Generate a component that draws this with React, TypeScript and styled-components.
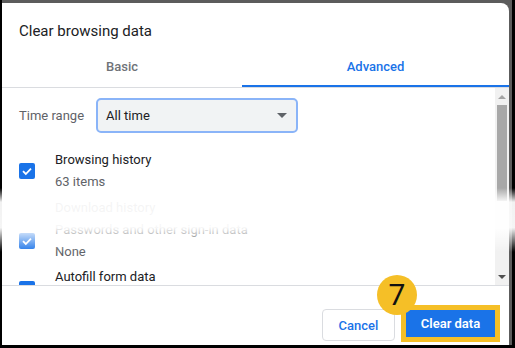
import React from "react"
import styled, { createGlobalStyle } from "styled-components"

const Global = createGlobalStyle`
  html, body {
    margin: 0;
    padding: 0;
    background: #000;
  }
  body {
    font-family: Roboto, "Liberation Sans", Arial, sans-serif;
  }
`

const Screen = styled.div`
  position: relative;
  width: 515px;
  height: 348px;
  background: #000;
  overflow: hidden;
`

const Frame = styled.div`
  margin-left: 2px;
  width: 510px;
  height: 345px;
  box-sizing: border-box;
  padding: 3px 3px 0 0;
  background: #5c5c5c;
`

const Dialog = styled.div`
  height: 342px;
  background: #fff;
  border-top-right-radius: 8px;
  display: flex;
  flex-direction: column;
`

const Title = styled.div`
  height: 47px;
  box-sizing: border-box;
  padding: 19px 0 0 17px;
  font-size: 15px;
  line-height: 18px;
  color: #202124;
`

const Tabs = styled.div`
  display: grid;
  grid-template-columns: 240px 1fr;
  height: 38px;
  box-sizing: border-box;
  border-bottom: 1px solid #dadce0;
`

const Tab = styled.div<{ $active?: boolean }>`
  display: flex;
  justify-content: center;
  padding-top: 9px;
  font-size: 13px;
  line-height: 15px;
  font-weight: 500;
  color: ${p => (p.$active ? "#1a73e8" : "#6f7378")};
  box-shadow: ${p => (p.$active ? "inset 0 -2px 0 #1a73e8" : "none")};
`

const Body = styled.div`
  display: flex;
  height: 197px;
  border-bottom: 1px solid #dadce0;
`

const Content = styled.div`
  flex: 1;
  padding: 10px 0 0 17px;
  overflow: hidden;
`

const RangeRow = styled.div`
  display: flex;
  align-items: center;
  gap: 12px;
  height: 35px;
`

const Label = styled.span`
  font-size: 13px;
  color: #5f6368;
`

const Select = styled.div`
  width: 202px;
  height: 35px;
  box-sizing: border-box;
  border: 2px solid #8ab4f8;
  border-radius: 5px;
  background: #f1f3f4;
  display: flex;
  align-items: center;
  justify-content: space-between;
  padding: 0 9px 0 8px;
  font-size: 13px;
  color: #202124;
`

const Caret = styled.span`
  width: 0;
  height: 0;
  border-left: 5px solid transparent;
  border-right: 5px solid transparent;
  border-top: 5px solid #5f6368;
`

const Items = styled.div`
  margin-top: 16px;
  display: flex;
  flex-direction: column;
`

const Item = styled.div<{ $gap?: number; $top?: boolean }>`
  display: grid;
  grid-template-columns: 36px 1fr;
  align-items: ${p => (p.$top ? "start" : "center")};
  margin-top: ${p => p.$gap || 0}px;
`

const Lines = styled.div`
  display: flex;
  flex-direction: column;
  font-size: 13px;
  line-height: 22px;
`

const Main = styled.span`
  color: #202124;
`

const Sub = styled.span`
  color: #5f6368;
`

const Box = styled.div<{ $offset?: number }>`
  width: 16px;
  height: 16px;
  margin-top: ${p => p.$offset || 0}px;
  border-radius: 2px;
  background: #1a73e8;
  display: flex;
  align-items: center;
  justify-content: center;
`

const Scrollbar = styled.div`
  width: 14px;
  background: #f1f1f1;
  display: flex;
  flex-direction: column;
  align-items: center;
`

const Arrow = styled.div<{ $down?: boolean; $color: string }>`
  height: 17px;
  display: flex;
  align-items: center;
  justify-content: center;
  &::before {
    content: "";
    border-left: 4px solid transparent;
    border-right: 4px solid transparent;
    ${p =>
      p.$down
        ? `border-top: 4px solid ${p.$color};`
        : `border-bottom: 4px solid ${p.$color};`}
  }
`

const Track = styled.div`
  flex: 1;
  width: 100%;
  display: flex;
  justify-content: center;
`

const Thumb = styled.div`
  width: 10px;
  height: 96px;
  background: #a8a8a8;
`

const Footer = styled.div`
  position: relative;
  flex: 1;
  display: flex;
  justify-content: flex-end;
  align-items: flex-end;
  gap: 6px;
  padding: 0 9px 3px 0;
`

const Button = styled.button<{ $primary?: boolean }>`
  font-family: inherit;
  font-size: 13px;
  font-weight: ${p => (p.$primary ? 600 : 500)};
  border-radius: 4px;
  cursor: pointer;
  ${p =>
    p.$primary
      ? `
    width: 89px;
    height: 27px;
    background: #1a73e8;
    color: #fff;
    border: none;
    border-radius: 0;
  `
      : `
    width: 73px;
    height: 32px;
    margin-bottom: 1px;
    background: #fff;
    color: #1a73e8;
    border: 1px solid #dadce0;
  `}
`

const Highlight = styled.div`
  border: 5px solid #f5bf27;
  display: flex;
`

const Badge = styled.div`
  position: absolute;
  left: 375px;
  top: -11px;
  width: 40px;
  height: 40px;
  border-radius: 50%;
  background: #f5bf27;
  color: #111;
  font-size: 30px;
  line-height: 1;
  display: flex;
  align-items: center;
  justify-content: center;
`

const Fade = styled.div`
  position: absolute;
  left: 0;
  right: 0;
  top: 188px;
  height: 64px;
  background: linear-gradient(
    to bottom,
    rgba(255, 255, 255, 0) 0%,
    rgba(255, 255, 255, 0.95) 22%,
    rgba(255, 255, 255, 0.96) 62%,
    rgba(255, 255, 255, 0) 100%
  );
  pointer-events: none;
`

const Check = ({ offset }: { offset?: number }) => (
  <Box $offset={offset}>
    <svg width="12" height="12" viewBox="0 0 12 12">
      <path d="M2 6.2 L4.8 9 L10 3.6" fill="none" stroke="#fff" strokeWidth="1.8" />
    </svg>
  </Box>
)

export default function App() {
  return (
    <Screen>
      <Global />
      <Frame>
        <Dialog>
          <Title>Clear browsing data</Title>
          <Tabs>
            <Tab>Basic</Tab>
            <Tab $active>Advanced</Tab>
          </Tabs>
          <Body>
            <Content>
              <RangeRow>
                <Label>Time range</Label>
                <Select>
                  All time
                  <Caret />
                </Select>
              </RangeRow>
              <Items>
                <Item>
                  <Check />
                  <Lines>
                    <Main>Browsing history</Main>
                    <Sub>63 items</Sub>
                  </Lines>
                </Item>
                <Item $gap={4}>
                  <span />
                  <Lines>
                    <Main>Download history</Main>
                  </Lines>
                </Item>
                <Item>
                  <Check />
                  <Lines>
                    <Main>Passwords and other sign-in data</Main>
                    <Sub>None</Sub>
                  </Lines>
                </Item>
                <Item $gap={3} $top>
                  <Check offset={15} />
                  <Lines>
                    <Main>Autofill form data</Main>
                  </Lines>
                </Item>
              </Items>
            </Content>
            <Scrollbar>
              <Arrow $color="#a3a3a3" />
              <Track>
                <Thumb />
              </Track>
              <Arrow $down $color="#505050" />
            </Scrollbar>
          </Body>
          <Footer>
            <Badge>7</Badge>
            <Button>Cancel</Button>
            <Highlight>
              <Button $primary>Clear data</Button>
            </Highlight>
          </Footer>
        </Dialog>
      </Frame>
      <Fade />
    </Screen>
  )
}
